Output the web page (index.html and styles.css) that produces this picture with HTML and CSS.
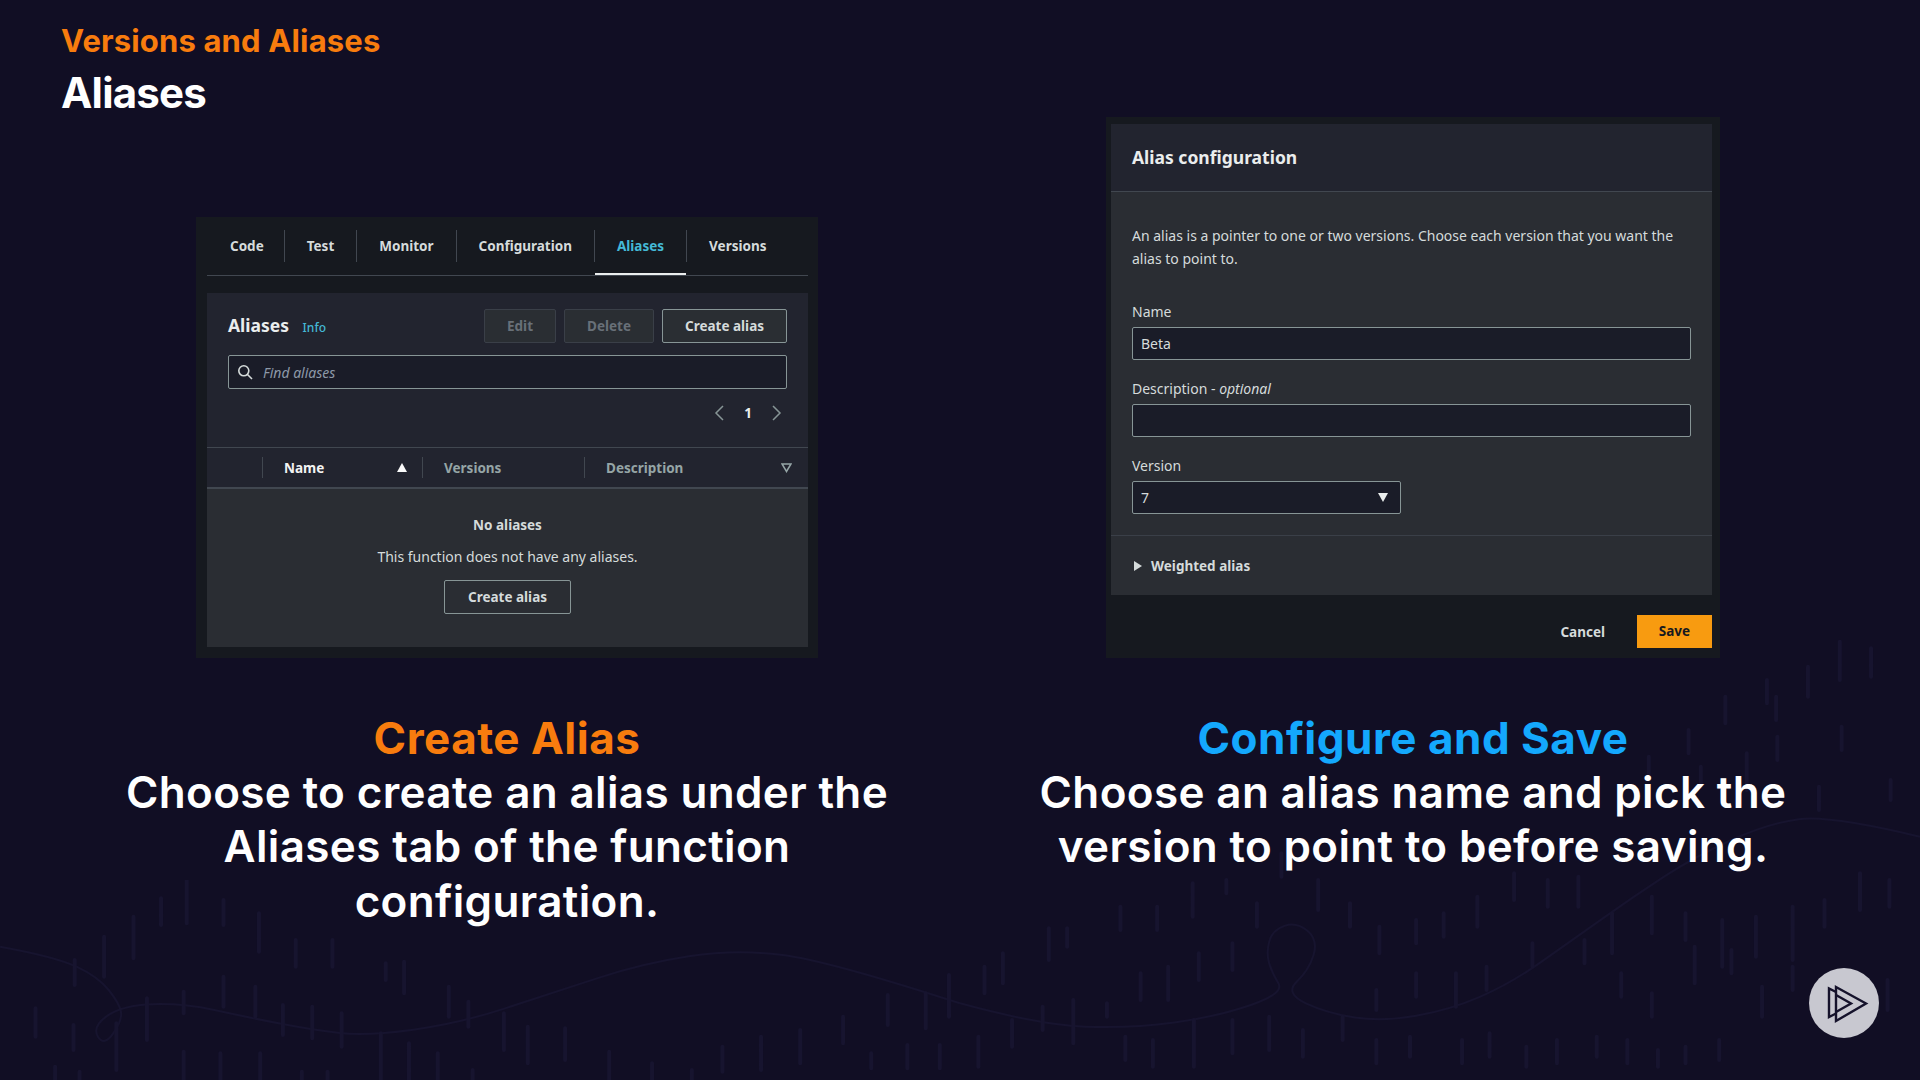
FILE: index.html
```html
<!DOCTYPE html>
<html lang="en">
<head>
    <meta charset="UTF-8">
    <title>Versions and Aliases - Aliases</title>
    <link rel="stylesheet" href="styles.css">
</head>
<body>

<!-- faint background texture -->
<svg class="backdrop" width="1920" height="1080" viewBox="0 0 1920 1080">
    <svg x="0" y="880" width="960" height="200" viewBox="0 0 1568 600" preserveAspectRatio="none">
        <path class="wave" d="M0 200Q90 230 125 260T177.500 330T197.500 395T185 460T160 470T175 407.500T250 372.500T350 390T455 430T555 459T675 449T825 385T975 295T1125 229T1275 224T1568 370"/>
        <path class="ticks" d="M305 0V130M263 55V135M365 60V135M423 100V215M218 110V235M170 170V290M122 240V315M483 180V260M543 180V260M630 250V300M660 245V340M365 290V380M300 335V400M417 320V410M462 375V465M510 380V475M558 400V500M240 355V480M190 430V570M120 435V510M58 385V470M733 320V410M765 365V440M823 400V510M862 440V550M923 445V540M300 515V600M360 520V600M425 520V600M622 460V600M668 490V600M715 520V600M995 515V600M1065 550V600M1130 570V600M1180 500V575M1243 470V570M1307 450V550M1377 410V490M1450 345V435M1512 340V445M1550 285V410M1423 520V565M1482 495V565M1535 495V565M90 560V600M130 575V600M493 575V600M535 575V600M772 570V600"/>
    </svg>
    <svg x="960" y="620" width="960" height="460" viewBox="0 0 1568 1380" preserveAspectRatio="none">
        <path class="wave" d="M0 1150Q130 1215 205 1220T350 1207.500T475 1155T520 1090T505 1030T505 965T530 917.500T567.500 932.500T577.500 1005T550 1085T565 1150T645 1192.500T745 1187.500T850 1130T950 1025T1050 895T1150 770T1260 660T1370 597.500T1568 650"/>
        <path class="ticks" d="M1437 65V180M1488 85V170M1385 140V230M1333 230V300M1250 230V310M1318 180V250M1190 330V400M1285 400V510M1335 350V420M1440 320V390M1125 410V480M1403 500V570M1210 440V500M1520 480V540M1470 760V870M1518 780V860M1412 840V920M1360 860V1020M1300 890V1010M1245 900V1040M1185 880V960M1130 830V940M1065 880V1000M1010 770V860M960 780V860M905 760V840M845 830V920M790 880V950M745 900V970M685 920V1000M637 850V920M585 780V870M525 700V770M485 850V920M435 780V820M380 790V890M322 860V930M262 860V930M145 925V1020M175 925V980M70 1000V1090M40 1040V1120M445 970V1050M390 1000V1080M340 1040V1140M295 1060V1140M240 1150V1190M185 1140V1270M135 1160V1230M85 1200V1280M30 1250V1340M270 1250V1320M315 1260V1340M382 1200V1340M445 1200V1300M505 1190V1290M560 1230V1310M625 1190V1260M680 1260V1330M735 1250V1310M820 1260V1330M865 1240V1310M925 1280V1340M975 1260V1330M1040 1250V1310M1090 1260V1330M1140 1290V1340M1185 1280V1330M1240 1260V1320M680 1110V1170M745 1060V1130M810 1060V1160M860 1040V1110M935 970V1040M1020 960V1030M1080 1060V1130M1130 1120V1190M1200 980V1090M1260 990V1060M1310 1100V1190M1360 1040V1110M1515 1080V1170"/>
    </svg>
</svg>

<div class="slide">
    <header class="slide-head">
        <div class="module-name">Versions and Aliases</div>
        <h1 class="slide-title">Aliases</h1>
    </header>

    <div class="columns">
        <!-- left: aliases tab -->
        <section class="col">
            <div class="shot-area">
                <div class="shot shot-tabs">
                    <nav class="tabs">
                        <span class="tab">Code</span>
                        <span class="tab">Test</span>
                        <span class="tab">Monitor</span>
                        <span class="tab">Configuration</span>
                        <span class="tab tab-active">Aliases</span>
                        <span class="tab">Versions</span>
                    </nav>
                    <div class="panel">
                        <div class="panel-top">
                            <div class="panel-row">
                                <div class="panel-title">Aliases <a class="info">Info</a></div>
                                <div class="panel-actions">
                                    <span class="btn btn-off btn-edit">Edit</span>
                                    <span class="btn btn-off btn-delete">Delete</span>
                                    <span class="btn btn-create">Create alias</span>
                                </div>
                            </div>
                            <div class="field search">
                                <svg class="search-icon" width="16" height="16" viewBox="0 0 16 16">
                                    <circle cx="6.800" cy="6.800" r="5"/>
                                    <path d="M10.500 10.500L15 15"/>
                                </svg>
                                <span>Find aliases</span>
                            </div>
                            <div class="pager">
                                <svg width="10" height="16" viewBox="0 0 10 16"><path d="M9 1L2 8l7 7"/></svg>
                                <b>1</b>
                                <svg width="10" height="16" viewBox="0 0 10 16"><path d="M1 1l7 7-7 7"/></svg>
                            </div>
                        </div>
                        <div class="table-head">
                            <div class="th th-blank"></div>
                            <div class="th th-sorted">Name <i class="arrow-up"></i></div>
                            <div class="th">Versions</div>
                            <div class="th th-last">Description
                                <svg width="11" height="10" viewBox="0 0 11 10"><path d="M1 1h9L5.500 8.500z"/></svg>
                            </div>
                        </div>
                        <div class="empty">
                            <div class="empty-title">No aliases</div>
                            <div class="empty-text">This function does not have any aliases.</div>
                            <span class="btn btn-empty">Create alias</span>
                        </div>
                    </div>
                </div>
            </div>
            <div class="caption">
                <div class="caption-head caption-orange">Create Alias</div>
                Choose to create an alias under the<br>
                Aliases tab of the function<br>
                configuration.
            </div>
        </section>

        <!-- right: alias form -->
        <section class="col">
            <div class="shot-area">
                <div class="shot shot-form">
                    <div class="form-box">
                        <div class="form-head">Alias configuration</div>
                        <div class="form-body">
                            <p class="form-note">An alias is a pointer to one or two versions. Choose each version that you want the alias to point to.</p>
                            <label class="form-label">Name</label>
                            <div class="field input">Beta</div>
                            <label class="form-label">Description - <em>optional</em></label>
                            <div class="field input"></div>
                            <label class="form-label">Version</label>
                            <div class="field input select">7 <i class="arrow-down"></i></div>
                        </div>
                        <div class="form-extra"><i class="arrow-right"></i>Weighted alias</div>
                    </div>
                    <div class="form-foot">
                        <span class="cancel">Cancel</span>
                        <span class="save">Save</span>
                    </div>
                </div>
            </div>
            <div class="caption">
                <div class="caption-head caption-blue">Configure and Save</div>
                Choose an alias name and pick the<br>
                version to point to before saving.
            </div>
        </section>
    </div>
</div>

<div class="logo">
    <svg width="70" height="70" viewBox="0 0 70 70">
        <path d="M27 19L57 35.500 27 53z"/>
        <path d="M27 27L42 35.500 27 44"/>
        <path d="M27 24L20 20.500V49L27 45.500"/>
    </svg>
</div>

</body>
</html>
```

FILE: styles.css
```css
html, body {
    margin: 0;
    padding: 0;
    width: 1920px;
    height: 1080px;
    overflow: hidden;
    background-color: #110e24;
    color: white;
    font-family: "Noto Sans", Roboto, sans-serif;
}
.backdrop {
    position: absolute;
    top: 0;
    left: 0;
}
.wave {
    fill: none;
    stroke: #17142f;
    stroke-width: 2px;
    stroke-linejoin: round;
    vector-effect: non-scaling-stroke;
}
.ticks {
    fill: none;
    stroke: #17142f;
    stroke-width: 4px;
    stroke-linecap: round;
    vector-effect: non-scaling-stroke;
}
.slide {
    position: relative;
    padding: 0 54px;
}
.slide-head {
    height: 117px;
    padding-left: 7px;
    font-family: Inter, Roboto, sans-serif;
}
.module-name {
    padding-top: 22px;
    font-size: 31px;
    line-height: 38px;
    font-weight: 700;
    letter-spacing: 0.150px;
    color: #f87c0e;
}
.slide-title {
    margin: 10px 0 0;
    font-size: 42px;
    line-height: 46px;
    font-weight: 700;
    letter-spacing: -0.800px;
}
.columns {
    display: grid;
    grid-template-columns: 906px 906px;
}
.col {
    display: flex;
    flex-direction: column;
    align-items: center;
}
.shot-area {
    height: 541px;
    display: flex;
    align-items: flex-end;
}
.shot {
    background-color: #16191f;
    box-sizing: border-box;
}
.caption {
    margin-top: 53px;
    font-family: Inter, Roboto, sans-serif;
    font-size: 44px;
    line-height: 54.500px;
    font-weight: 600;
    letter-spacing: 0.350px;
    text-align: center;
}
.caption-head {
    margin-bottom: -1px;
    font-weight: 700;
    letter-spacing: 0.500px;
}
.caption-orange { color: #f87c0e; }
.caption-blue { color: #14a8fd; }

/* left screenshot */
.shot-tabs {
    width: 622px;
    height: 441px;
    padding: 0 10px 11px 11px;
}
.tabs {
    display: flex;
    height: 59px;
    padding-top: 13px;
    box-sizing: border-box;
    border-bottom: 1px solid #414750;
}
.tab {
    position: relative;
    height: 32px;
    line-height: 32px;
    padding: 0 22px;
    font-size: 13.500px;
    font-weight: 700;
    color: #d5dbdb;
    border-right: 1px solid #414750;
}
.tab:first-child { padding: 0 20px 0 23px; }
.tab:last-child { border-right: none; }
.tab-active { color: #44b9d6; }
.tab-active::after {
    content: "";
    position: absolute;
    left: 0;
    right: 0;
    bottom: -13px;
    height: 2px;
    background-color: #eaeded;
}
.panel {
    margin-top: 17px;
    background-color: #22242f;
}
.panel-top {
    height: 154px;
    padding: 16px 21px 0;
    box-sizing: border-box;
}
.panel-row {
    display: flex;
    justify-content: space-between;
    align-items: center;
    height: 34px;
}
.panel-title {
    margin-top: -2px;
    font-size: 17.500px;
    font-weight: 700;
    color: #eaeded;
}
.info {
    margin-left: 9px;
    font-size: 12px;
    font-weight: 500;
    color: #44b9d6;
}
.panel-actions {
    display: flex;
    gap: 8px;
}
.btn {
    box-sizing: border-box;
    display: flex;
    justify-content: center;
    align-items: center;
    height: 34px;
    font-size: 13.500px;
    font-weight: 700;
    border: 1px solid #879596;
    border-radius: 2px;
    color: #d5dbdb;
}
.btn-off {
    background-color: #2a2e33;
    border-color: #3a3f48;
    color: #687078;
}
.btn-edit { width: 72px; }
.btn-delete { width: 90px; }
.btn-create { width: 125px; background-color: #2a2e33; }
.btn-empty { width: 127px; margin: 13px auto 0; }
.field {
    box-sizing: border-box;
    height: 34px;
    background-color: #1a1c28;
    border: 1px solid #879596;
    border-radius: 2px;
    font-size: 14px;
    display: flex;
    align-items: center;
}
.search {
    margin-top: 12px;
    padding-left: 8px;
    gap: 10px;
    font-style: italic;
    color: #8d99a8;
}
.search-icon { fill: none; stroke: #d5dbdb; stroke-width: 1.600px; }
.pager {
    display: flex;
    justify-content: flex-end;
    align-items: center;
    gap: 20px;
    height: 24px;
    margin-top: 12px;
    padding-right: 5px;
    font-size: 13.500px;
    color: #eaeded;
}
.pager svg { fill: none; stroke: #879596; stroke-width: 1.500px; }
.table-head {
    display: grid;
    grid-template-columns: 56px 160px 162px 1fr;
    height: 42px;
    padding-top: 9px;
    box-sizing: border-box;
    border-top: 1px solid #414750;
    border-bottom: 2px solid #414750;
}
.th {
    display: flex;
    align-items: center;
    height: 21px;
    padding-left: 21px;
    font-size: 13.500px;
    font-weight: 700;
    color: #95a5a6;
    border-right: 1px solid #414750;
}
.th-blank { padding: 0; }
.th-sorted {
    justify-content: space-between;
    padding-right: 15px;
    color: #f2f3f3;
}
.th-last {
    justify-content: space-between;
    border-right: none;
    padding-right: 16px;
}
.th-last svg { fill: none; stroke: #95a5a6; stroke-width: 1.500px; }
.arrow-up {
    width: 0;
    height: 0;
    border-left: 5px solid transparent;
    border-right: 5px solid transparent;
    border-bottom: 9px solid #fafafa;
}
.empty {
    height: 158px;
    padding-top: 26px;
    box-sizing: border-box;
    background-color: #2a2d33;
    text-align: center;
    font-size: 14px;
}
.empty-title {
    line-height: 20px;
    font-size: 13.500px;
    font-weight: 700;
    color: #d5dbdb;
}
.empty-text {
    margin-top: 12px;
    line-height: 20px;
    color: #d5dbdb;
}

/* right screenshot */
.shot-form {
    width: 614px;
    height: 541px;
    padding: 7px 8px 0 5px;
}
.form-box {
    background-color: #2a2d33;
}
.form-head {
    height: 68px;
    padding-left: 21px;
    box-sizing: border-box;
    line-height: 66px;
    font-size: 17.500px;
    font-weight: 700;
    color: #eaeded;
    background-color: #22242f;
    border-bottom: 1px solid #414750;
}
.form-body {
    padding: 32px 21px 21px;
    border-bottom: 1px solid #3a3f48;
}
.form-note {
    margin: 0;
    font-size: 14px;
    line-height: 23px;
    color: #d5dbdb;
}
.form-label {
    display: block;
    margin: 19px 0 5px;
    font-size: 14px;
    line-height: 20px;
    color: #d5dbdb;
}
.form-note + .form-label { margin-top: 32px; }
.input {
    height: 33px;
    padding-left: 8px;
    color: #d5dbdb;
}
.select {
    width: 269px;
    justify-content: space-between;
    padding-right: 12px;
}
.arrow-down {
    width: 0;
    height: 0;
    border-left: 5.500px solid transparent;
    border-right: 5.500px solid transparent;
    border-top: 9px solid #eaeded;
}
.form-extra {
    display: flex;
    align-items: center;
    gap: 9px;
    height: 59px;
    padding-left: 23px;
    box-sizing: border-box;
    font-size: 13.500px;
    font-weight: 700;
    color: #d5dbdb;
}
.arrow-right {
    width: 0;
    height: 0;
    border-top: 5px solid transparent;
    border-bottom: 5px solid transparent;
    border-left: 8px solid #d5dbdb;
}
.form-foot {
    display: flex;
    justify-content: flex-end;
    align-items: center;
    gap: 32px;
    padding-top: 20px;
    font-size: 13.500px;
    font-weight: 700;
}
.cancel { color: #d5dbdb; }
.save {
    width: 75px;
    height: 33px;
    line-height: 33px;
    text-align: center;
    background-color: #f89b10;
    color: #16191f;
}

.logo {
    position: absolute;
    left: 1809px;
    top: 968px;
    width: 70px;
    height: 70px;
    border-radius: 50%;
    background-color: #c8c8d0;
}
.logo svg {
    display: block;
    fill: none;
    stroke: #15122b;
    stroke-width: 2.400px;
}
```
